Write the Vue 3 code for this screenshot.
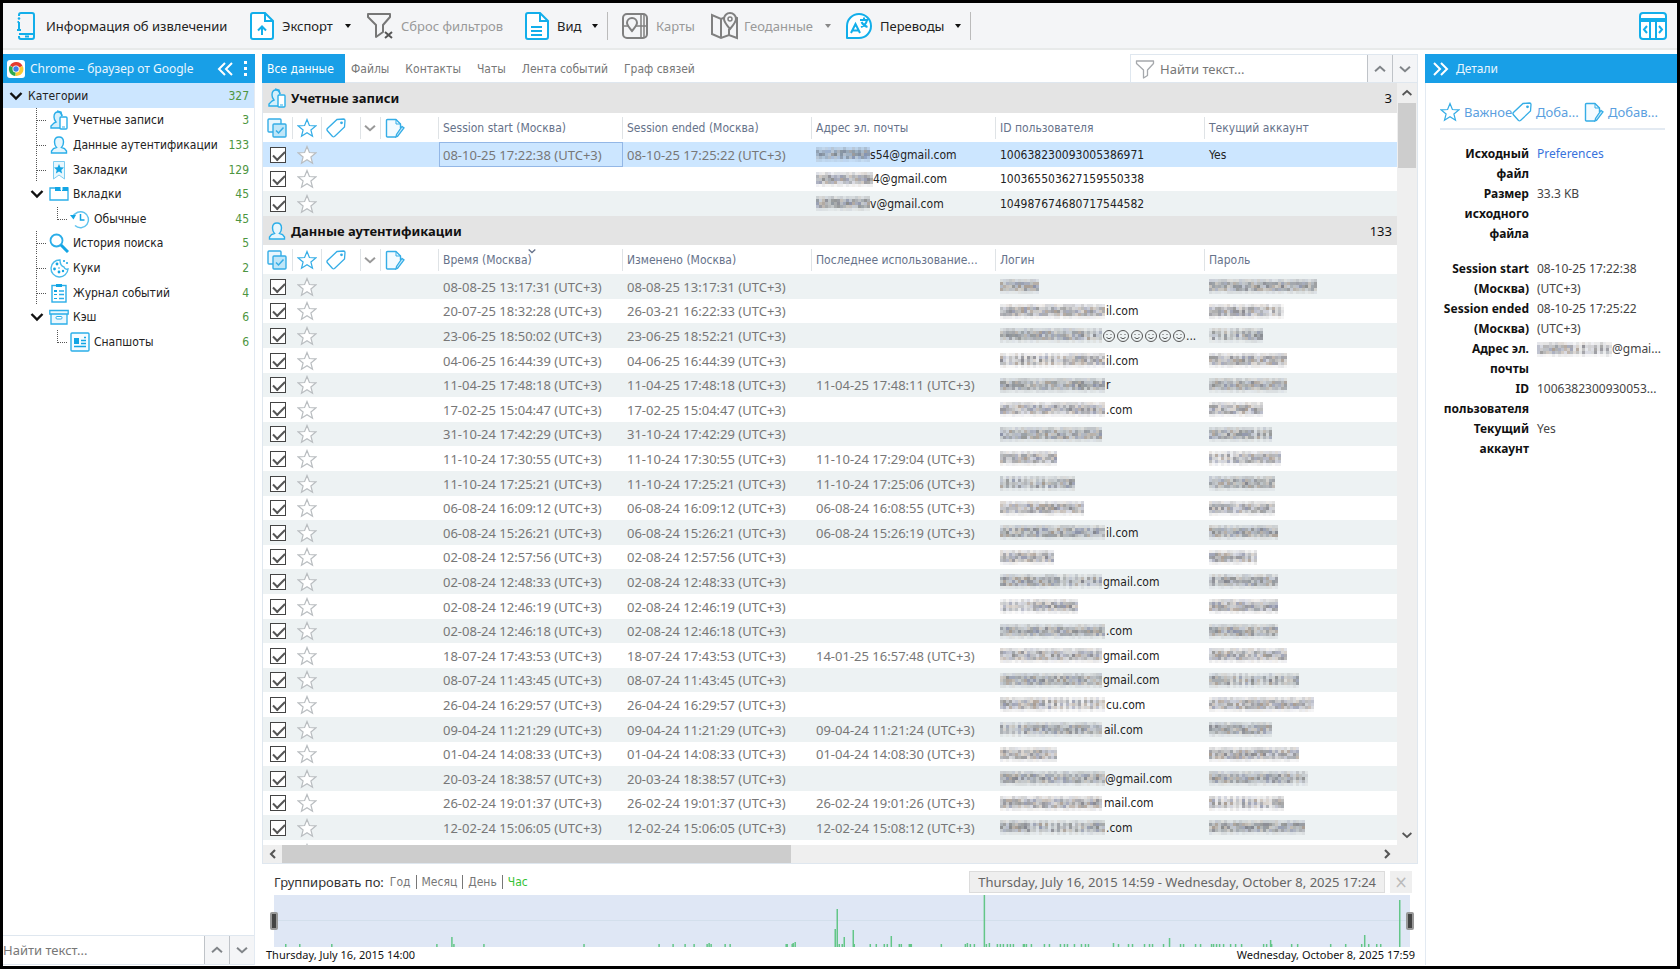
<script setup>
import { h } from 'vue'

const tools = [
  { icon: 'phone', w: 26, label: 'Информация об извлечении', cls: 't-info' },
  { icon: 'export', w: 26, label: 'Экспорт', caret: true, cls: 't-export' },
  { icon: 'nofilter', w: 28, label: 'Сброс фильтров', off: true, cls: 't-reset' },
  { icon: 'doc', w: 26, label: 'Вид', caret: true, cls: 't-view' },
  { sep: true },
  { icon: 'map', w: 28, label: 'Карты', off: true, cls: 't-maps' },
  { icon: 'geo', w: 30, label: 'Геоданные', off: true, caret: true, cls: 't-geo' },
  { icon: 'translate', w: 28, label: 'Переводы', caret: true, cls: 't-tr' },
  { sep: true }
]

const tree = [
  { level: 0, lead: 'open', label: 'Категории', n: 327 },
  { level: 1, lead: 'tee', icon: 'accounts', label: 'Учетные записи', n: 3 },
  { level: 1, lead: 'tee', icon: 'person', label: 'Данные аутентификации', n: 133 },
  { level: 1, lead: 'tee', icon: 'bookmark', label: 'Закладки', n: 129 },
  { level: 1, lead: 'open', icon: 'tabs', label: 'Вкладки', n: 45 },
  { level: 2, lead: 'ell', icon: 'history', label: 'Обычные', n: 45 },
  { level: 1, lead: 'tee', icon: 'search', label: 'История поиска', n: 5 },
  { level: 1, lead: 'tee', icon: 'cookie', label: 'Куки', n: 2 },
  { level: 1, lead: 'tee', icon: 'journal', label: 'Журнал событий', n: 4 },
  { level: 1, lead: 'open', icon: 'box', label: 'Кэш', n: 6 },
  { level: 2, lead: 'ell', icon: 'snap', label: 'Снапшоты', n: 6 }
]

const tabs = ['Все данные', 'Файлы', 'Контакты', 'Чаты', 'Лента событий', 'Граф связей']

const z = ' (UTC+3)'
const accounts = [
  { a: '08-10-25 17:22:38' + z, b: '08-10-25 17:25:22' + z, m: 54, mail: 's54@gmail.com', id: '100638230093005386971', cur: 'Yes' },
  { a: '', b: '', m: 57, mail: '4@gmail.com', id: '100365503627159550338', cur: '' },
  { a: '', b: '', m: 54, mail: 'v@gmail.com', id: '104987674680717544582', cur: '' }
]

const auth = [
  ['08-08-25 13:17:31', '08-08-25 13:17:31', '', 40, '', 110],
  ['20-07-25 18:32:28', '26-03-21 16:22:33', '', 106, 'il.com', 75],
  ['23-06-25 18:50:02', '23-06-25 18:52:21', '', 102, '...', 56, true],
  ['04-06-25 16:44:39', '04-06-25 16:44:39', '', 106, 'il.com', 80],
  ['11-04-25 17:48:18', '11-04-25 17:48:18', '11-04-25 17:48:11', 106, 'r', 78],
  ['17-02-25 15:04:47', '17-02-25 15:04:47', '', 106, '.com', 56],
  ['31-10-24 17:42:29', '31-10-24 17:42:29', '', 104, '', 63],
  ['11-10-24 17:30:55', '11-10-24 17:30:55', '11-10-24 17:29:04', 59, '', 73],
  ['11-10-24 17:25:21', '11-10-24 17:25:21', '11-10-24 17:25:06', 75, '', 68],
  ['06-08-24 16:09:12', '06-08-24 16:09:12', '06-08-24 16:08:55', 86, '', 66],
  ['06-08-24 15:26:21', '06-08-24 15:26:21', '06-08-24 15:26:19', 106, 'il.com', 70],
  ['02-08-24 12:57:56', '02-08-24 12:57:56', '', 55, '', 50],
  ['02-08-24 12:48:33', '02-08-24 12:48:33', '', 103, 'gmail.com', 70],
  ['02-08-24 12:46:19', '02-08-24 12:46:19', '', 78, '', 70],
  ['02-08-24 12:46:18', '02-08-24 12:46:18', '', 106, '.com', 70],
  ['18-07-24 17:43:53', '18-07-24 17:43:53', '14-01-25 16:57:48', 103, 'gmail.com', 78],
  ['08-07-24 11:43:45', '08-07-24 11:43:45', '', 103, 'gmail.com', 90],
  ['26-04-24 16:29:57', '26-04-24 16:29:57', '', 106, 'cu.com', 106],
  ['09-04-24 11:21:29', '09-04-24 11:21:29', '09-04-24 11:21:24', 104, 'ail.com', 63],
  ['01-04-24 14:08:33', '01-04-24 14:08:33', '01-04-24 14:08:30', 58, '', 90],
  ['20-03-24 18:38:57', '20-03-24 18:38:57', '', 105, '@gmail.com', 101],
  ['26-02-24 19:01:37', '26-02-24 19:01:37', '26-02-24 19:01:26', 104, 'mail.com', 75],
  ['12-02-24 15:06:05', '12-02-24 15:06:05', '12-02-24 15:08:12', 106, '.com', 97],
  ['', '', '', 0, '', 0]
].map(r => ({ a: r[0] && r[0] + z, b: r[1] && r[1] + z, c: r[2] && r[2] + z, m: r[3], login: r[4], p: r[5], faces: r[6] }))

// Mosaic drawn in place of redacted characters
const tints = ['#4a5275', '#4a4a4a', '#75604f', '#555c66', '#454550']
const strength = [0.2, 0.44, 0.48, 0.42, 0.1]
const Mosaic = (props) => {
  const cells = []
  const cols = Math.floor(props.w / 3)
  for (let y = 0; y < 5; y++) {
    for (let x = 0; x < cols; x++) {
      const r = Math.abs(Math.sin((x + 1) * 12.9898 + (y + 1) * 78.233 + props.seed * 37.719) * 43758.5453) % 1
      const gap = Math.abs(Math.sin((x + 3) * 4.7 + props.seed * 9.1)) < 0.12 ? 0.5 : 1
      cells.push(h('rect', { x: x * 3, y: y * 3, width: 3, height: 3, fill: tints[Math.floor(r * 50) % 5], 'fill-opacity': (strength[y] * (0.5 + r * 0.8) * gap).toFixed(2) }))
    }
  }
  return h('svg', { width: props.w, height: 15, viewBox: `0 0 ${props.w} 15`, 'aria-hidden': 'true' }, cells)
}
Mosaic.props = ['w', 'seed']

const Icon = (props) => h('svg', { viewBox: props.box || '0 0 20 20', 'aria-hidden': 'true' }, [h('use', { href: '#i-' + props.name })])
Icon.props = ['name', 'box']

const start = 274
const bars = [
  [285, 3], [299, 3], [331, 3], [436, 3], [451, 10], [453, 3], [483, 3],
  [583, 3], [658, 3], [672, 3], [684, 3], [693, 3], [706, 3], [708, 4], [710, 3], [724, 3], [729, 3],
  [785, 3], [786, 3], [791, 3], [792, 4], [794, 5], [834, 18], [836, 38], [838, 3], [841, 3], [843, 10], [852, 17], [853, 3],
  [869, 3], [875, 3], [883, 3], [886, 3], [890, 11], [898, 3], [900, 3], [908, 3], [909, 3], [910, 3], [940, 3],
  [964, 3], [966, 4], [969, 3], [973, 3], [983, 52], [985, 3], [988, 4], [996, 3], [999, 3], [1002, 3], [1006, 3], [1009, 3], [1012, 3],
  [1022, 3], [1023, 3], [1025, 3], [1030, 3], [1043, 3], [1048, 3], [1059, 3], [1063, 3], [1066, 3], [1073, 3], [1080, 3], [1084, 3], [1087, 3],
  [1112, 4], [1117, 3], [1127, 3], [1131, 3], [1143, 3], [1148, 3], [1151, 3], [1162, 3], [1168, 9], [1179, 3], [1182, 3], [1194, 3], [1199, 3],
  [1210, 3], [1212, 3], [1215, 3], [1218, 3], [1222, 3], [1229, 3], [1234, 3], [1240, 3], [1262, 3], [1265, 3], [1269, 7], [1270, 3],
  [1290, 3], [1296, 3], [1329, 3], [1344, 3], [1360, 3], [1363, 12], [1367, 3], [1375, 3], [1379, 3], [1398, 47]
]

const details = [
  { k: 'Исходный файл', v: 'Preferences', link: true },
  { k: 'Размер исходного файла', v: '33.3 KB', gap: true },
  { k: 'Session start (Москва)', v: '08-10-25 17:22:38 (UTC+3)' },
  { k: 'Session ended (Москва)', v: '08-10-25 17:25:22 (UTC+3)' },
  { k: 'Адрес эл. почты', v: '@gmai...', mask: true },
  { k: 'ID пользователя', v: '1006382300930053...' },
  { k: 'Текущий аккаунт', v: 'Yes' }
]
</script>

<template>
  <div class="window">
    <svg class="defs" aria-hidden="true">
      <symbol id="i-phone" viewBox="0 0 26 28"><path d="M6 4V3q0-2 2-2h11q2 0 2 2v22q0 2-2 2H8q-2 0-2-2v-1M6 22h15" fill="none" stroke="#12aeea" stroke-width="2" /><path d="M6 10v8M4 18h4M4.500 10H6M12 24.500h4" stroke="#12aeea" stroke-width="2" fill="none" /><circle cx="6" cy="6.500" r="1.300" fill="#12aeea" /></symbol>
      <symbol id="i-export" viewBox="0 0 26 28"><path d="M4 1h12l8 8v16q0 2-2 2H4q-2 0-2-2V3q0-2 2-2z" fill="#fff" stroke="#12aeea" stroke-width="2" /><path d="M16 1v8h8M13 23v-8M9 18.500l4-4 4 4" fill="none" stroke="#12aeea" stroke-width="2" /></symbol>
      <symbol id="i-doc" viewBox="0 0 26 28"><path d="M4 1h12l8 8v16q0 2-2 2H4q-2 0-2-2V3q0-2 2-2z" fill="#fff" stroke="#12aeea" stroke-width="2" /><path d="M16 1v8h8M7 15h11M7 19h11M7 23h11" fill="none" stroke="#12aeea" stroke-width="2" /></symbol>
      <symbol id="i-nofilter" viewBox="0 0 28 28"><path d="M2 2h22v3l-7 8v7l-7 5V13L2 5z" fill="none" stroke="#777" stroke-width="2" stroke-linejoin="round" /><path d="M19 20l7 6M26 20l-7 6" stroke="#555" stroke-width="2" /></symbol>
      <symbol id="i-map" viewBox="0 0 28 28"><rect x="2" y="2" width="24" height="24" rx="4" fill="none" stroke="#808080" stroke-width="2" /><path d="M20 2v24M2 14h5M15 14h11M23 2v24" stroke="#808080" stroke-width="1.500" fill="none" /><path d="M11 19q-5-6-5-8a5 5 0 0 1 10 0q0 2-5 8z" fill="#f4f5f7" stroke="#808080" stroke-width="2" /></symbol>
      <symbol id="i-geo" viewBox="0 0 30 28"><path d="M18 5l-1 0-5 2-9-4v19l9 4 8-3 8 3V6l-3-1M12 7v19M20 17v6" fill="none" stroke="#808080" stroke-width="2" /><path d="M21 17q-6-7-6-10a6 6 0 0 1 12 0q0 3-6 10z" fill="#f4f5f7" stroke="#808080" stroke-width="2" /><circle cx="21" cy="7" r="2" fill="none" stroke="#808080" stroke-width="1.500" /></symbol>
      <symbol id="i-translate" viewBox="0 0 28 28"><path d="M2 26V14A12 12 0 1 1 14 26z" fill="#fff" stroke="#12aeea" stroke-width="2" stroke-linejoin="round" /><path d="M6 21l4.500-9 4.500 9M8 18.500h5M15 8h8M19 5.500V8M22 8q-1 5-6 7M16.500 10q2 4 6 5" fill="none" stroke="#12aeea" stroke-width="2" /></symbol>
      <symbol id="i-layout" viewBox="0 0 28 28"><rect x="1" y="1" width="26" height="26" rx="3" fill="#fff" stroke="#12aeea" stroke-width="2" /><path d="M1 7h26M1 9h26M11 8v19M17 8v19M8 14l-3 3.500 3 3.500M20 14l3 3.500-3 3.500" fill="none" stroke="#12aeea" stroke-width="2" /></symbol>
      <symbol id="i-chrome" viewBox="0 0 20 20"><rect x="1" y="1" width="18" height="18" rx="3" fill="#fff" /><path d="M10 10L4 6.500A7 7 0 0 1 16.500 7z" fill="#e33b2e" /><path d="M10 10L3.700 6.700A7 7 0 0 0 9.500 17z" fill="#2da94f" /><path d="M10 10l6.700-3A7 7 0 0 1 9.500 17z" fill="#fcc934" /><circle cx="10" cy="10" r="3.500" fill="#fff" /><circle cx="10" cy="10" r="2.700" fill="#3f7de8" /></symbol>
      <symbol id="i-accounts" viewBox="0 0 20 20"><path d="M11 18H2v-2l3-3 2-1q-2-2-2-5 0-5 4-5 3 0 4 4" fill="#d5f0fc" stroke="#2aaee9" stroke-width="1.400" /><path d="M8 1l4 1 1 4" fill="none" stroke="#2aaee9" stroke-width="1.400" /><rect x="11" y="7" width="7" height="12" rx="1" fill="#fff" stroke="#2aaee9" stroke-width="1.400" /><path d="M13 17h3" stroke="#2aaee9" /></symbol>
      <symbol id="i-person" viewBox="0 0 20 20"><path d="M2.500 18v-2l2-2.500 3-1Q5.500 10.500 5.500 7 5.500 2 10 2t4.500 5q0 3.500-2 5.500l3 1 2 2.500v2z" fill="#e6f6fd" stroke="#2aaee9" stroke-width="1.400" /></symbol>
      <symbol id="i-bookmark" viewBox="0 0 20 20"><path d="M4.500 1.500h11V19L10 15l-5.500 4z" fill="#e9f7fd" stroke="#7fcdf0" /><path d="M10 4l1.400 3.300 3.600.3-2.700 2.300.8 3.500-3.100-1.900-3.100 1.900.8-3.500L5 7.600l3.600-.3z" fill="#12a5e4" /></symbol>
      <symbol id="i-tabs" viewBox="0 0 20 20"><path d="M1 4h18v12H1z" fill="#fff" stroke="#2aaee9" stroke-width="1.300" /><path d="M6 3h6v4H6zM13 3h6v4h-6z" fill="#12a5e4" /><path d="M11.500 2h2v4h-2z" fill="#fff" /></symbol>
      <symbol id="i-history" viewBox="0 0 20 20"><path d="M3 8a8 8 0 1 1 2 8.500" fill="none" stroke="#5fc3ee" stroke-width="1.500" /><path d="M0 6l3.500 4.500L6 6z" fill="#12a5e4" /><path d="M10.500 5v6h4" fill="none" stroke="#12a5e4" stroke-width="1.500" /></symbol>
      <symbol id="i-search" viewBox="0 0 20 20"><circle cx="7.500" cy="7.500" r="6" fill="none" stroke="#2aaee9" stroke-width="1.800" /><path d="M12 12l7 7" stroke="#12a5e4" stroke-width="3" /></symbol>
      <symbol id="i-cookie" viewBox="0 0 20 20"><path d="M11 2a8.500 8.500 0 1 0 8 9q-3 1-4-2-4-1-4-7z" fill="#fff" stroke="#4abbeb" stroke-width="1.400" /><g fill="#12a5e4"><circle cx="8" cy="6" r="1.400" /><circle cx="5.500" cy="11" r="1.400" /><circle cx="10" cy="14" r="1.400" /><circle cx="14" cy="13" r="1.200" /><circle cx="15" cy="3" r="1" /><circle cx="18" cy="5" r="1" /><circle cx="10" cy="10" r=".8" /></g></symbol>
      <symbol id="i-journal" viewBox="0 0 20 20"><rect x="3" y="2.500" width="14" height="16.500" fill="#fff" stroke="#2aaee9" stroke-width="1.400" /><path d="M7 1h6v3H7zM5 7h3v2H5zM5 11h3v1H5zM5 15h3v1H5z" fill="#12a5e4" /><path d="M10 8h5M10 11.500h5M10 15.500h5" stroke="#2aaee9" stroke-width="1.300" /></symbol>
      <symbol id="i-box" viewBox="0 0 20 20"><path d="M.8 3.500h18.400v3.500H.8zM2 7h16v10H2z" fill="#eaf7fd" stroke="#2aaee9" stroke-width="1.300" /><rect x="7" y="9.500" width="6" height="2.500" rx="1" fill="#fff" stroke="#2aaee9" /></symbol>
      <symbol id="i-snap" viewBox="0 0 20 20"><rect x="1" y="1" width="18" height="18" rx="1" fill="#f4fbff" stroke="#2aaee9" stroke-width="1.400" /><path d="M4 6h5v6H4z" fill="#12a5e4" /><path d="M11 8.500h5M11 11.500h5M4 14.500h12M14 5.500h2" stroke="#12a5e4" stroke-width="1.500" /></symbol>
      <symbol id="i-checks" viewBox="0 0 20 20"><rect x="1" y="1" width="13" height="13" rx="1" fill="#e8f6fd" stroke="#35ade6" stroke-width="1.400" /><rect x="6" y="6" width="13" height="13" rx="1" fill="#bfe6f8" stroke="#35ade6" stroke-width="1.400" /><path d="M9 12.500l2.500 2.500 5-5.500" fill="none" stroke="#35ade6" stroke-width="1.500" /></symbol>
      <symbol id="i-star" viewBox="0 0 20 20"><path d="M10 1.500l2.400 6 6.400.4-4.900 4.100 1.600 6.300L10 14.800l-5.500 3.500 1.600-6.300-4.900-4.100 6.400-.4z" fill="#fff" stroke="currentColor" stroke-width="1.200" /></symbol>
      <symbol id="i-tag" viewBox="0 0 20 20"><path d="M11 1.500l6.500-.5q1.500 0 1.500 1.500L18.500 9 8.500 18.500q-1 .7-2 0L1.200 12.500q-.6-1 .2-2z" fill="#fff" stroke="#35ade6" stroke-width="1.300" /><circle cx="15.500" cy="4.800" r="1.400" fill="#35ade6" /></symbol>
      <symbol id="i-note" viewBox="0 0 20 20"><path d="M11 19H2.500q-1 0-1-1V2.500q0-1 1-1H11l4.500 4.500v4" fill="#f4fbff" stroke="#35ade6" stroke-width="1.400" stroke-linejoin="round" /><path d="M11 1.500V6h4.500" fill="none" stroke="#35ade6" /><path d="M12.500 18.500l-1.500.5.500-2.500 5.500-8 2 1.500z" fill="#c9eafa" stroke="#35ade6" stroke-width="1.300" /></symbol>
      <symbol id="i-funnel" viewBox="0 0 20 20"><path d="M1.500 2h17v2.500L12.500 11v5.500l-4 2.500v-8L1.500 4.500z" fill="none" stroke="#a5a8ac" stroke-width="1.300" stroke-linejoin="round" /></symbol>
      <symbol id="i-up" viewBox="0 0 20 20"><path d="M4.500 12.500L10 7.500l5.500 5" fill="none" stroke="currentColor" stroke-width="2.200" /></symbol>
      <symbol id="i-down" viewBox="0 0 20 20"><path d="M4.500 7.500l5.500 5 5.500-5" fill="none" stroke="currentColor" stroke-width="2.200" /></symbol>
      <symbol id="i-left" viewBox="0 0 20 20"><path d="M12.500 5l-5 5 5 5" fill="none" stroke="currentColor" stroke-width="2.600" /></symbol>
      <symbol id="i-right" viewBox="0 0 20 20"><path d="M7.500 5l5 5-5 5" fill="none" stroke="currentColor" stroke-width="2.600" /></symbol>
      <symbol id="i-dleft" viewBox="0 0 20 20"><path d="M9 4l-6 6 6 6M16 4l-6 6 6 6" fill="none" stroke="#fff" stroke-width="2" /></symbol>
      <symbol id="i-dright" viewBox="0 0 20 20"><path d="M4 4l6 6-6 6M11 4l6 6-6 6" fill="none" stroke="#fff" stroke-width="2" /></symbol>
      <symbol id="i-open" viewBox="0 0 20 24"><path d="M2.500 9l5.500 5.500L13.500 9" fill="none" stroke="#111" stroke-width="2.400" /></symbol>
      <symbol id="i-tee" viewBox="0 0 20 24"><path d="M7.500 0v24M8 12.500h10" fill="none" stroke="#555" stroke-dasharray="1 1" /></symbol>
      <symbol id="i-ell" viewBox="0 0 20 24"><path d="M7.500 0v13M8 12.500h10" fill="none" stroke="#555" stroke-dasharray="1 1" /></symbol>
      <symbol id="i-face" viewBox="0 0 14 14"><circle cx="7" cy="7" r="5.500" fill="none" stroke="#555" /><path d="M4.500 8.500q2.500 2.500 5 0M4.500 5.500h1M8.500 5.500h1" stroke="#555" fill="none" /></symbol>
    </svg>

    <header class="toolbar">
      <template v-for="(t, i) in tools" :key="i">
        <span v-if="t.sep" class="sep"></span>
        <button v-else type="button" class="tool" :class="[t.cls, { off: t.off }]">
          <Icon class="big" :name="t.icon" :box="`0 0 ${t.w} 28`" />
          <span>{{ t.label }}</span>
          <i v-if="t.caret" class="caret"></i>
        </button>
      </template>
      <button type="button" class="layout" aria-label="Панели"><Icon class="big" name="layout" box="0 0 28 28" /></button>
    </header>

    <div class="body">
      <aside class="side">
        <div class="bluebar">
          <Icon class="ic" name="chrome" />
          <span class="grow">Chrome – браузер от Google</span>
          <button type="button" aria-label="Свернуть"><Icon class="ic" name="dleft" /></button>
          <button type="button" class="dots" aria-label="Меню"><i></i><i></i><i></i></button>
        </div>
        <ul class="tree">
          <li v-for="r in tree" :key="r.label" :class="'l' + r.level">
            <span class="lead"><Icon class="conn" :name="r.lead" box="0 0 20 24" /></span>
            <Icon v-if="r.icon" class="ic" :name="r.icon" />
            <span class="name">{{ r.label }}</span>
            <span class="num">{{ r.n }}</span>
          </li>
        </ul>
        <div class="find">
          <input type="text" placeholder="Найти текст..." aria-label="Найти в категориях">
          <button type="button" aria-label="Назад"><Icon class="ic" name="up" /></button>
          <button type="button" aria-label="Вперед"><Icon class="ic" name="down" /></button>
        </div>
      </aside>

      <main class="main">
        <div class="tabbar">
          <nav class="tabs">
            <button v-for="(t, i) in tabs" :key="t" type="button" :class="{ on: i === 0 }">{{ t }}</button>
          </nav>
          <div class="find top">
            <Icon class="ic" name="funnel" />
            <input type="text" placeholder="Найти текст..." aria-label="Найти текст">
            <button type="button" aria-label="Назад"><Icon class="ic" name="up" /></button>
            <button type="button" aria-label="Вперед"><Icon class="ic" name="down" /></button>
          </div>
        </div>

        <div class="grid">
          <div class="sheets">
            <h2 class="first"><Icon class="ic" name="accounts" /><span class="grow">Учетные записи</span><span class="total">3</span></h2>
            <table>
              <colgroup><col class="c1"><col class="c2"><col class="c3"><col class="c4"><col class="c5"><col class="c6"><col class="c7"><col class="c8"><col class="c9"><col></colgroup>
              <thead>
                <tr>
                  <th><Icon class="ic" name="checks" /></th><th><Icon class="ic blue" name="star" /></th><th><Icon class="ic" name="tag" /></th><th><Icon class="ic grey" name="down" /></th><th class="l"><Icon class="ic" name="note" /></th>
                  <th class="t">Session start (Москва)</th><th class="t">Session ended (Москва)</th><th class="t">Адрес эл. почты</th><th class="t">ID пользователя</th><th class="t">Текущий аккаунт</th>
                </tr>
              </thead>
              <tbody class="acc">
                <tr v-for="(r, i) in accounts" :key="i" :class="{ sel: i === 0 }">
                  <td><input type="checkbox" checked aria-label="Выбрать запись"></td>
                  <td><Icon class="ic pale" name="star" /></td><td></td><td></td><td></td>
                  <td class="t date" :class="{ focus: i === 0 }">{{ r.a }}</td><td class="t date">{{ r.b }}</td>
                  <td class="t val"><span class="masked"><Mosaic :w="r.m" :seed="i + 1" />{{ r.mail }}</span></td>
                  <td class="t val">{{ r.id }}</td><td class="t val">{{ r.cur }}</td>
                </tr>
              </tbody>
            </table>

            <h2><Icon class="ic" name="person" /><span class="grow">Данные аутентификации</span><span class="total">133</span></h2>
            <table>
              <colgroup><col class="c1"><col class="c2"><col class="c3"><col class="c4"><col class="c5"><col class="c6"><col class="c7"><col class="c8"><col class="c9"><col></colgroup>
              <thead>
                <tr>
                  <th><Icon class="ic" name="checks" /></th><th><Icon class="ic blue" name="star" /></th><th><Icon class="ic" name="tag" /></th><th><Icon class="ic grey" name="down" /></th><th class="l"><Icon class="ic" name="note" /></th>
                  <th class="t sorted">Время (Москва)<Icon class="sort" name="down" /></th><th class="t">Изменено (Москва)</th><th class="t">Последнее использование...</th><th class="t">Логин</th><th class="t">Пароль</th>
                </tr>
              </thead>
              <tbody class="auth">
                <tr v-for="(r, i) in auth" :key="i">
                  <td><input v-if="r.a" type="checkbox" checked aria-label="Выбрать запись"></td>
                  <td><Icon class="ic pale" name="star" /></td><td></td><td></td><td></td>
                  <td class="t date">{{ r.a }}</td><td class="t date">{{ r.b }}</td><td class="t date">{{ r.c }}</td>
                  <td class="t val"><span v-if="r.m" class="masked"><Mosaic :w="r.m" :seed="i + 11" /><template v-if="r.faces"><Icon v-for="f in 6" :key="f" class="face" name="face" box="0 0 14 14" /></template>{{ r.login }}</span></td>
                  <td class="t val"><span v-if="r.p" class="masked"><Mosaic :w="r.p" :seed="i + 51" /></span></td>
                </tr>
              </tbody>
            </table>
          </div>
          <div class="vbar"><Icon class="arrow" name="up" /><i></i><Icon class="arrow" name="down" /></div>
          <div class="hbar"><Icon class="arrow" name="left" /><i></i><Icon class="arrow" name="right" /></div>
          <div class="corner"></div>
        </div>

        <section class="timeline">
          <div class="group">
            <span class="by">Группировать по:</span>
            <button type="button">Год</button><b></b><button type="button">Месяц</button><b></b><button type="button">День</button><b></b><button type="button" class="on">Час</button>
            <span class="range">Thursday, July 16, 2015 14:59 - Wednesday, October 8, 2025 17:24</span>
            <button type="button" class="close" aria-label="Сбросить">×</button>
          </div>
          <div class="chart">
            <svg viewBox="0 0 1135 52" preserveAspectRatio="none" aria-hidden="true">
              <rect width="1135" height="52" fill="#dfe7f5" />
              <path d="M0 25.500h1135" stroke="#d3dfec" />
              <rect v-for="(b, i) in bars" :key="i" :x="b[0] - start" :y="52 - b[1]" width="1.500" :height="b[1]" fill="#63c688" />
            </svg>
            <span class="handle from"></span><span class="handle to"></span>
          </div>
          <div class="ends"><span>Thursday, July 16, 2015 14:00</span><span>Wednesday, October 8, 2025 17:59</span></div>
        </section>
      </main>

      <aside class="details">
        <div class="bluebar"><button type="button" aria-label="Свернуть"><Icon class="ic" name="dright" /></button><span>Детали</span></div>
        <div class="acts">
          <button type="button"><Icon class="ic blue" name="star" />Важное</button>
          <button type="button"><Icon class="ic" name="tag" />Доба...</button>
          <button type="button"><Icon class="ic" name="note" />Добав...</button>
        </div>
        <dl>
          <div v-for="d in details" :key="d.k" :class="{ gap: d.gap }">
            <dt>{{ d.k }}</dt>
            <dd><a v-if="d.link" href="#">{{ d.v }}</a><span v-else-if="d.mask" class="masked"><Mosaic :w="75" :seed="91" />{{ d.v }}</span><template v-else>{{ d.v }}</template></dd>
          </div>
        </dl>
      </aside>
    </div>
  </div>
</template>

<style>
body { overflow: hidden; }
</style>

<style scoped>
* { box-sizing: border-box; }
.window { height: 100vh; display: flex; flex-direction: column; border: 3px solid #000; background: #fff; font: 13px/20px "Noto Sans", "Open Sans", sans-serif; color: #222; }
.defs { position: absolute; width: 0; height: 0; }
button { border: 0; background: none; padding: 0; font: inherit; color: inherit; display: flex; align-items: center; }
input[type="text"] { border: 0; background: none; outline: 0; padding: 0; min-width: 0; flex: 1; font: inherit; }
input::placeholder { color: #777; opacity: 1; }
svg { display: block; flex: none; }
.ic { width: 20px; height: 20px; }
.grow { flex: 1; }

.toolbar { flex: none; height: 47px; display: flex; align-items: center; background: #f4f5f7; border-bottom: 2px solid #e8eaea; padding: 0 10px 0 10px; }
.big { height: 28px; }
.tool { white-space: nowrap; gap: 7px; }
.tool.off { color: #999; }
.t-info { width: 236px; gap: 7px; }
.t-export { width: 117px; }
.t-reset { width: 158px; }
.t-view { width: 83px; }
.t-maps { width: 88px; margin-left: 13px; }
.t-geo { width: 136px; gap: 5px; }
.t-tr { width: 125px; }
.caret { margin-left: auto; margin-right: 14px; border: 3px solid transparent; border-top: 4px solid #111; border-bottom: 0; }
.t-export .caret { margin-right: 15px; }
.t-view .caret { margin-right: 9px; }
.t-tr .caret { margin-right: 9px; }
.off .caret { border-top-color: #888; }
.sep { width: 1px; height: 28px; background: #bbb; }
.layout { margin-left: auto; }

.body { flex: 1; min-height: 0; display: flex; padding: 4px 0 1px; }
.side { width: 252px; flex: none; display: flex; flex-direction: column; border-right: 1px solid #e3eaf2; margin-right: 7px; }
.bluebar { flex: none; height: 29px; display: flex; align-items: center; background: #189fe7; color: #eaf6fe; padding: 0 5px 0 3px; gap: 4px; }
.side .bluebar { margin-right: -1px; font-size: 12px; white-space: nowrap; }
.dots { flex-direction: column; gap: 3px; width: 10px; }
.dots i { width: 3px; height: 3px; background: #fff; }
.tree { flex: 1; list-style: none; margin: 0; padding: 0; font-family: "DejaVu Sans Condensed", "Noto Sans", sans-serif; font-size: 12px; }
.tree li { height: 25px; display: flex; align-items: center; padding-right: 5px; white-space: nowrap; }
.tree li:nth-child(5n + 2), .tree li:nth-child(5n + 5) { height: 24px; }
.tree .l0 { background: #cce6ff; }
.lead { flex: none; width: 46px; height: 100%; display: flex; justify-content: flex-end; align-items: center; overflow: hidden; }
.l0 .lead { width: 25px; }
.l2 .lead { width: 67px; }
.conn { width: 20px; height: 24px; }
.name { margin-left: 4px; flex: 1; }
.l0 .name { margin-left: 0; }
.num { color: #4d9540; }
.find { flex: none; height: 30px; display: flex; align-items: stretch; border-top: 1px solid #dfe7ef; border-bottom: 1px solid #dfe7ef; }
.find button { width: 25px; justify-content: center; background: #f4f5f7; border-left: 1px solid #bfc3c8; color: #808488; }
.find button .ic { width: 18px; }

.main { flex: 1; min-width: 0; display: flex; flex-direction: column; margin-right: 7px; }
.tabbar { flex: none; height: 29px; display: flex; border-bottom: 1px solid #dfe7ef; }
.tabs { flex: 1; display: flex; height: 29px; color: #777; white-space: nowrap; gap: 16px; font-family: "DejaVu Sans Condensed", "Noto Sans", sans-serif; font-size: 12px; }
.tabs button.on { background: #189fe7; color: #fff; padding: 0 5px; margin-right: -10px; width: 83px; }
.find.top { width: 288px; height: 29px; align-items: center; border: 1px solid #dfe7ef; padding-left: 4px; }
.find.top button { height: 100%; }
.find.top input { margin-left: 5px; }
.grid { flex: 1; min-height: 0; display: grid; grid-template-columns: minmax(0, 1fr) 20px; grid-template-rows: minmax(0, 1fr) 18px; border: 1px solid #dfe7ef; border-top: 0; }
.sheets { overflow: hidden; min-height: 0; }
h2 { margin: 0; height: 29px; display: flex; align-items: center; gap: 4px; padding: 0 5px 0 4px; background: #e4e4e4; font-size: 13px; line-height: 20px; color: #111; }
h2.first { height: 30px; }
.total { font-weight: 400; }
table { width: 100%; table-layout: fixed; border-collapse: separate; border-spacing: 0; }
.c1 { width: 30px; } .c2 { width: 29px; } .c3 { width: 39px; } .c4 { width: 20px; } .c5 { width: 58px; }
.c6 { width: 184px; } .c7 { width: 189px; } .c8 { width: 184px; } .c9 { width: 209px; }
th, td { padding: 0; height: 25px; line-height: 20px; white-space: nowrap; overflow: hidden; text-align: left; font-weight: 400; vertical-align: middle; }
th { height: 29px; color: #66728a; background: linear-gradient(#dfe3e6, #dfe3e6) right center / 1px 22px no-repeat; position: relative; font-family: "DejaVu Sans Condensed", "Noto Sans", sans-serif; font-size: 12px; }
th:last-child { background: none; }
th .ic, td .ic { margin: 0 auto 0 4px; }
th:nth-child(4) .ic { margin-left: 0; }
.t { padding-left: 4px; }
.val { font-family: "DejaVu Sans Condensed", "Noto Sans", sans-serif; font-size: 12px; }
.auth tr:nth-child(5n + 2) td, .auth tr:nth-child(5n + 5) td, .acc tr:nth-child(2) td { height: 24px; }
.auth tr:nth-child(odd), .acc tr:nth-child(3) { background: #edf2f3; }
.acc .sel { background: #cce6ff; }
.focus { box-shadow: inset 0 0 0 1px #93b7e6; }
.date { color: #777; }
.blue { color: #35ade6; }
.pale { color: #b9bdc0; }
.grey { color: #999; }
th .grey { width: 18px; }
.sort { position: absolute; left: 87px; top: 0; width: 12px; height: 12px; }
input[type="checkbox"] { appearance: none; display: block; width: 16px; height: 16px; margin: 0 0 0 7px; border: 1px solid #444; background: #fff; position: relative; }
input[type="checkbox"]::before { content: ""; position: absolute; left: 2px; top: 3px; width: 10px; height: 5px; border: solid #555; border-width: 0 0 2px 2px; transform: rotate(-45deg); }
.masked { display: flex; align-items: center; }
.face { width: 14px; height: 14px; }
.vbar { display: flex; flex-direction: column; align-items: center; background: #efefef; }
.vbar i { width: 18px; height: 65px; background: #cdcdcd; margin-bottom: auto; }
.arrow { width: 16px; height: 20px; color: #555; }
.hbar { display: flex; align-items: center; background: #efefef; padding: 0 1px; }
.hbar .arrow { width: 18px; height: 16px; }
.hbar i { width: 45%; height: 18px; background: #cdcdcd; margin-right: auto; }
.corner { background: #efefef; }

.timeline { flex: none; padding: 6px 0 0; }
.group { display: flex; align-items: center; height: 25px; padding: 0 6px 1px 12px; color: #777; white-space: nowrap; }
.group button { font-family: "DejaVu Sans Condensed", "Noto Sans", sans-serif; font-size: 12px; }
.by { color: #333; margin-right: 6px; }
.group b { width: 1px; height: 14px; background: #777; margin: 0 5px; }
.group .on { color: #35c235; }
.range { margin-left: auto; border: 1px solid #dcdcdc; background: #efefef; color: #666; padding: 0 8px; }
.group .close { width: 22px; height: 22px; justify-content: center; background: #efefef; color: #bbb; margin-left: 5px; font-size: 18px; }
.chart { position: relative; margin: 0 8px 0 12px; height: 52px; }
.chart svg { width: 100%; height: 52px; }
.handle { position: absolute; top: 17px; width: 8px; height: 18px; border: 2px solid #999; border-radius: 2px; background: #444; }
.from { left: -4px; } .to { right: -4px; }
.ends { display: flex; justify-content: space-between; height: 18px; padding: 0 3px 0 4px; font-size: 11px; line-height: 16px; color: #111; }

.details { width: 252px; flex: none; border-left: 1px solid #e3eaf2; }
.details .bluebar { margin-left: -1px; gap: 6px; padding-left: 5px; font-size: 12px; }
.acts { display: flex; margin: 19px 12px 0 14px; height: 28px; border-bottom: 2px solid #e3eaf2; color: #5b9fe0; white-space: nowrap; align-items: flex-start; }
.acts button { gap: 4px; width: 72px; }
dl { margin: 14px 13px 0 12px; }
dl div { display: grid; grid-template-columns: 91px minmax(0, 1fr); gap: 8px; }
dl .gap { margin-bottom: 15px; }
dt { font-weight: 700; text-align: right; font-size: 12px; color: #111; }
dd { margin: 0; font-size: 12px; color: #444; }
a { color: #3873dc; text-decoration: none; }
</style>
